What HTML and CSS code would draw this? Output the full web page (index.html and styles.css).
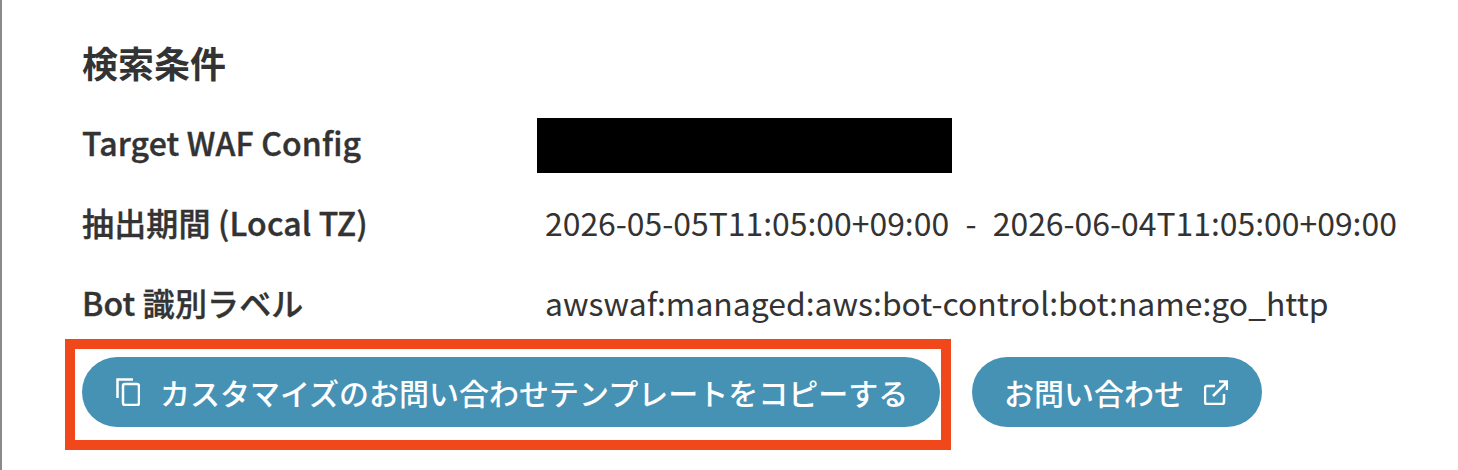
FILE: index.html
```html
<!DOCTYPE html>
<html lang="ja">
<head>
    <meta charset="UTF-8">
    <meta name="viewport" content="width=device-width, initial-scale=1.0">
    <title>検索条件</title>
    <link rel="stylesheet" href="styles.css">
</head>
<body>
    <div class="panel">
        <h2 class="title">検索条件</h2>

        <div class="row">
            <div class="row-label">Target WAF Config</div>
            <div class="row-value"><span class="masked"></span></div>
        </div>
        <div class="row">
            <div class="row-label">抽出期間 (Local TZ)</div>
            <div class="row-value">2026-05-05T11:05:00+09:00&nbsp; -&nbsp; 2026-06-04T11:05:00+09:00</div>
        </div>
        <div class="row">
            <div class="row-label">Bot 識別ラベル</div>
            <div class="row-value">awswaf:managed:aws:bot-control:bot:name:go_http</div>
        </div>

        <div class="actions">
            <div class="highlight"></div>
            <button class="btn btn-copy">
                <svg class="icon" width="24" height="28" viewBox="0 0 24 28" fill="none" stroke="currentColor" stroke-width="2.500">
                    <path d="M1.500 20V1.500H17"/>
                    <rect x="7" y="6" width="16" height="21" rx="2"/>
                </svg>
                カスタマイズのお問い合わせテンプレートをコピーする
            </button>
            <button class="btn btn-contact">
                お問い合わせ
                <svg class="icon" width="24" height="25" viewBox="0 0 24 25" fill="none" stroke="currentColor" stroke-width="2.500">
                    <path d="M11 6H3a2 2 0 0 0-2 2V22a2 2 0 0 0 2 2h15a2 2 0 0 0 2-2V14"/>
                    <path d="M9 16 23 2M15 1.500h8V10"/>
                </svg>
            </button>
        </div>
    </div>
</body>
</html>
```

FILE: styles.css
```css
* {
    box-sizing: border-box;
}

html, body {
    margin: 0;
    height: 100%;
}

body {
    font-family: "Noto Sans CJK JP", "Noto Sans", sans-serif;
    color: #333;
    background: #fff;
    overflow: hidden;
}

.panel {
    height: 470px;
    padding: 37px 0 0 80px;
    border-left: 2px solid #8a8a8a;
}

.title {
    margin: 0 0 15px;
    font-size: 36px;
    line-height: 50px;
    font-weight: 700;
}

.row {
    display: flex;
    align-items: center;
    height: 80px;
}

.row-label {
    width: 463px;
    font-size: 32px;
    font-weight: 500;
    letter-spacing: 0.15px;
    -webkit-text-stroke: 0.4px #333;
}

.row-value {
    font-size: 31.900px;
    white-space: nowrap;
    word-spacing: 1px;
}

.masked {
    display: block;
    width: 415px;
    height: 55px;
    margin: 6px 0 0 -8px;
    background: #000;
}

.actions {
    position: relative;
    display: flex;
    gap: 32px;
    margin-top: 15px;
}

.highlight {
    position: absolute;
    left: -17px;
    top: -18px;
    width: 886px;
    height: 111px;
    border: 10px solid #f0471b;
}

.btn {
    position: relative;
    display: flex;
    align-items: center;
    height: 70px;
    border: none;
    border-radius: 35px;
    background: #4692b5;
    color: #fff;
    font-family: inherit;
    font-size: 30px;
    font-weight: 500;
    white-space: nowrap;
}

.btn-copy {
    width: 858px;
    padding: 0 0 0 34px;
    gap: 20px;
}

.btn-contact {
    width: 290px;
    padding: 0 0 0 32px;
    gap: 20px;
}
```
